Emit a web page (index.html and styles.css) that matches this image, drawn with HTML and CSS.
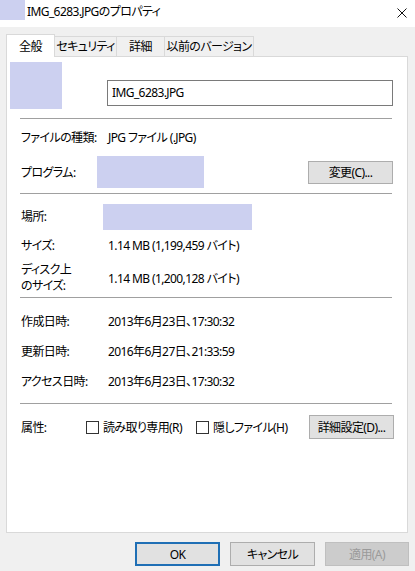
FILE: index.html
```html
<!DOCTYPE html>
<html lang="ja">
<head>
  <meta charset="UTF-8">
  <meta name="viewport" content="width=device-width, initial-scale=1">
  <title>IMG_6283.JPGのプロパティ</title>
  <link rel="stylesheet" href="styles.css">
</head>
<body>
  <div class="window">
    <div class="titlebar">
      <span class="app-icon"></span>
      <span class="title">IMG_6283.JPGのプロパティ</span>
      <span class="close">
        <svg width="10" height="10" viewBox="0 0 10 10"><path d="M0.5 0.5 L9.5 9.5 M9.5 0.5 L0.5 9.5" stroke="#111" stroke-width="1" fill="none"/></svg>
      </span>
    </div>

    <div class="tabs">
      <div class="tab active">全般</div>
      <div class="tab tab-security">セキュリティ</div>
      <div class="tab tab-details">詳細</div>
      <div class="tab tab-versions">以前のバージョン</div>
    </div>

    <div class="panel">
      <div class="head">
        <div class="thumb"></div>
        <div class="name-box">IMG_6283.JPG</div>
      </div>
      <div class="sep"></div>

      <div class="row row-type">
        <span class="label">ファイルの種類:</span>
        <span class="value">JPG ファイル (.JPG)</span>
      </div>
      <div class="row row-program">
        <span class="label label-program">プログラム:</span>
        <span class="blank blank-program"></span>
        <button class="btn btn-right">変更(C)...</button>
      </div>
      <div class="sep sep-2"></div>

      <div class="row row-location">
        <span class="label label-location">場所:</span>
        <span class="blank blank-location"></span>
      </div>
      <div class="row row-size">
        <span class="label">サイズ:</span>
        <span class="value">1.14 MB (1,199,459 バイト)</span>
      </div>
      <div class="row row-disk">
        <span class="label label-two">ディスク上<br>のサイズ:</span>
        <span class="value">1.14 MB (1,200,128 バイト)</span>
      </div>
      <div class="sep"></div>

      <div class="dates">
        <div class="row row-date">
          <span class="label">作成日時:</span>
          <span class="value">2013年6月23日、17:30:32</span>
        </div>
        <div class="row row-date">
          <span class="label">更新日時:</span>
          <span class="value">2016年6月27日、21:33:59</span>
        </div>
        <div class="row row-date">
          <span class="label">アクセス日時:</span>
          <span class="value">2013年6月23日、17:30:32</span>
        </div>
      </div>
      <div class="sep"></div>

      <div class="row row-attr">
        <span class="label label-attr">属性:</span>
        <label class="check"><span class="box"></span>読み取り専用(R)</label>
        <label class="check"><span class="box"></span>隠しファイル(H)</label>
        <button class="btn btn-right">詳細設定(D)...</button>
      </div>
    </div>

    <div class="footer">
      <button class="btn btn-ok">OK</button>
      <button class="btn">キャンセル</button>
      <button class="btn btn-disabled">適用(A)</button>
    </div>
  </div>
</body>
</html>
```

FILE: styles.css
```css
* {
  box-sizing: border-box;
}
body {
  margin: 0;
  background-color: #f0f0f0;
  color: #000;
  font-family: "Noto Sans", "Noto Sans CJK JP", sans-serif;
  font-size: 12px;
  letter-spacing: -0.6px;
  font-feature-settings: "palt";
  white-space: nowrap;
}
.window {
  width: 415px;
  height: 571px;
}
.titlebar {
  display: flex;
  height: 27px;
  background-color: #fff;
}
.app-icon {
  width: 25px;
  height: 20px;
  background-color: #ccd0f0;
}
.title {
  margin-left: 2px;
  line-height: 24px;
}
.close {
  margin-left: auto;
  margin-right: 8px;
  margin-top: 8px;
  width: 10px;
  height: 10px;
}
.close svg {
  display: block;
}
.tabs {
  display: flex;
  align-items: flex-end;
  height: 22px;
  margin-top: 7px;
  padding-left: 6px;
}
.tab {
  height: 20px;
  line-height: 19px;
  text-align: center;
  border: 1px solid #d9d9d9;
  border-left: none;
  border-bottom: none;
  background-color: #f0f0f0;
}
.tab.active {
  position: relative;
  z-index: 1;
  width: 49px;
  height: 23px;
  margin-bottom: -1px;
  line-height: 24px;
  border-left: 1px solid #d9d9d9;
  background-color: #fff;
}
.tab-security {
  width: 62px;
}
.tab-details {
  width: 48px;
}
.tab-versions {
  width: 89px;
}
.panel {
  width: 402px;
  height: 477px;
  margin-left: 6px;
  background-color: #fff;
  border: 1px solid #d9d9d9;
}
.head {
  display: flex;
  align-items: flex-start;
  height: 61px;
}
.thumb {
  width: 52px;
  height: 47px;
  margin-left: 3px;
  margin-top: 5px;
  background-color: #ccd0f0;
}
.name-box {
  width: 286px;
  height: 26px;
  margin-left: 45px;
  margin-top: 23px;
  padding-left: 4px;
  line-height: 24px;
  border: 1px solid #7a7a7a;
}
.sep {
  height: 1px;
  margin: 0 15px 0 13px;
  background-color: #a0a0a0;
}
.sep-2 {
  margin-top: 4px;
}
.row {
  display: flex;
  align-items: center;
  padding-left: 14px;
  padding-right: 13px;
}
.label {
  width: 87px;
  flex-shrink: 0;
}
.row-type {
  height: 36px;
}
.row-program {
  height: 34px;
}
.label-program {
  width: 76px;
}
.blank {
  background-color: #ccd0f0;
}
.blank-program {
  width: 107px;
  height: 32px;
}
.btn {
  height: 24px;
  width: 85px;
  padding: 0;
  font: inherit;
  letter-spacing: inherit;
  color: #000;
  background-color: #e1e1e1;
  border: 1px solid #adadad;
}
.btn-right {
  margin-left: auto;
}
.row-program .btn-right {
  margin-right: 1px;
  height: 23px;
}
.row-location {
  height: 37px;
  padding-top: 10px;
  align-items: flex-start;
}
.label-location {
  width: 82px;
  line-height: 26px;
}
.blank-location {
  width: 149px;
  height: 26px;
}
.row-size {
  height: 28px;
}
.row-disk {
  height: 38px;
}
.label-two {
  line-height: 16px;
}
.dates {
  padding: 8px 0;
}
.row-date {
  height: 30px;
}
.row-date:last-child {
  height: 29px;
}
.row-attr {
  height: 46px;
}
.label-attr {
  width: 65px;
}
.check {
  display: flex;
  align-items: center;
  margin-right: 14px;
}
.box {
  width: 13px;
  height: 13px;
  margin-right: 4px;
  border: 1px solid #333;
  background-color: #fff;
}
.footer {
  display: flex;
  justify-content: flex-end;
  gap: 10px;
  margin-top: 9px;
  padding-right: 6px;
}
.footer .btn {
  height: 24px;
}
.btn-ok {
  border: 2px solid #1f6fb5;
}
.btn-disabled {
  width: 84px;
  color: #9a9a9a;
  background-color: #cccccc;
  border-color: #bfbfbf;
}
```
